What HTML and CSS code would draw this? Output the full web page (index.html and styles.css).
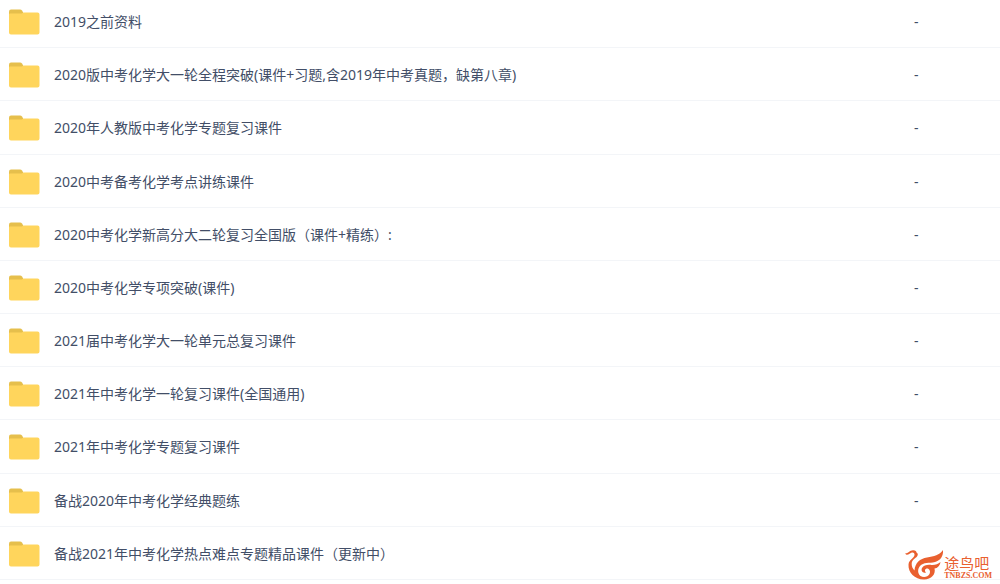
FILE: index.html
```html
<!DOCTYPE html>
<html lang="zh-CN">
<head>
    <meta charset="UTF-8">
    <title>中考化学</title>
    <link rel="stylesheet" href="styles.css">
</head>
<body>
    <!-- Folder icon shared by all rows -->
    <svg class="symbols" aria-hidden="true">
        <symbol id="folder" viewBox="0 0 32 26">
            <path d="M1 2.5Q1 .5 3 .5H12Q13.400 .5 14 1.500L16 5V10H1Z" fill="#e6bf4c"/>
            <path d="M1 5.500Q1 4.500 2 4.500H13Q14 4.500 14.600 4L15 3.700Q15.500 3.500 16.500 3.500H29.500Q31.500 3.500 31.500 5.500V23.500Q31.500 25.500 29.500 25.500H3Q1 25.500 1 23.500Z" fill="#ffd55c"/>
        </symbol>
    </svg>

    <table class="file-list">
        <tbody>
            <tr>
                <td><a class="file" href="#"><svg class="icon"><use href="#folder"/></svg>2019之前资料</a></td>
                <td class="size">-</td>
            </tr>
            <tr>
                <td><a class="file" href="#"><svg class="icon"><use href="#folder"/></svg>2020版中考化学大一轮全程突破(课件+习题,含2019年中考真题，缺第八章)</a></td>
                <td class="size">-</td>
            </tr>
            <tr>
                <td><a class="file" href="#"><svg class="icon"><use href="#folder"/></svg>2020年人教版中考化学专题复习课件</a></td>
                <td class="size">-</td>
            </tr>
            <tr>
                <td><a class="file" href="#"><svg class="icon"><use href="#folder"/></svg>2020中考备考化学考点讲练课件</a></td>
                <td class="size">-</td>
            </tr>
            <tr>
                <td><a class="file" href="#"><svg class="icon"><use href="#folder"/></svg>2020中考化学新高分大二轮复习全国版（课件+精练）:</a></td>
                <td class="size">-</td>
            </tr>
            <tr>
                <td><a class="file" href="#"><svg class="icon"><use href="#folder"/></svg>2020中考化学专项突破(课件)</a></td>
                <td class="size">-</td>
            </tr>
            <tr>
                <td><a class="file" href="#"><svg class="icon"><use href="#folder"/></svg>2021届中考化学大一轮单元总复习课件</a></td>
                <td class="size">-</td>
            </tr>
            <tr>
                <td><a class="file" href="#"><svg class="icon"><use href="#folder"/></svg>2021年中考化学一轮复习课件(全国通用)</a></td>
                <td class="size">-</td>
            </tr>
            <tr>
                <td><a class="file" href="#"><svg class="icon"><use href="#folder"/></svg>2021年中考化学专题复习课件</a></td>
                <td class="size">-</td>
            </tr>
            <tr>
                <td><a class="file" href="#"><svg class="icon"><use href="#folder"/></svg>备战2020年中考化学经典题练</a></td>
                <td class="size">-</td>
            </tr>
            <tr>
                <td><a class="file" href="#"><svg class="icon"><use href="#folder"/></svg>备战2021年中考化学热点难点专题精品课件（更新中）</a></td>
                <td class="size"></td>
            </tr>
        </tbody>
    </table>

    <div class="watermark">
        <svg class="bird" viewBox="0 0 40 30" aria-hidden="true">
            <!-- head, neck and wing -->
            <path d="M1 3.500C4 3.800 5.500 .5 9 .3C11.500 .2 12.500 1.500 12.500 2.500C14 3 14.300 5 13 6.500C11.500 8.300 8 9.500 7.700 13.500C7.500 16.500 8.800 18.500 10.500 20.500C11 13 16 8.500 23 7.500C30 6.500 35.500 5 39 0C39.500 6 36.500 10.500 31 12C25 13.500 19.500 12 16 16C13.500 19 13.500 23.500 16.500 26C19.500 28 24 27 25.500 24C27 21 25 18 22.500 18.500C20.500 19 20.500 21.500 22 22.500C18.500 23.500 16.800 20.500 18 18C19.500 15 24 14.500 27.500 15C31 15.300 34 14 36.500 12C36 15.500 33.500 18.300 30.500 18.500C32 24 27.500 29.500 20 29.500C10.500 29.500 4 22.500 4.500 14.500C4.800 9.500 10 8.500 10.500 5C10.800 3 9 2 7 3C4.500 4.300 3 5.800 1 3.500Z" fill="#e9602f"/>
        </svg>
        <div class="brand">
            <span class="brand-name">途鸟吧</span>
            <span class="brand-url">TNBZS.COM</span>
        </div>
    </div>
</body>
</html>
```
FILE: styles.css
```css
body {
    margin: 0;
    background-color: #fff;
    color: #424e67;
    font-family: "Noto Sans", "Noto Sans CJK SC", sans-serif;
    font-size: 14px;
    line-height: 20px;
}

.symbols {
    display: none;
}

/* File list */
.file-list {
    width: 100%;
    height: calc(100vh - 4px);
    border-collapse: separate;
    border-spacing: 0;
}

.file-list td {
    padding: 14px 0 12px;
    border-bottom: 1px solid #f3f5f8;
}

.file-list tr:first-child td {
    padding-top: 9px;
}

.file-list .size {
    width: 8.6%;
}

.file {
    display: flex;
    align-items: center;
    gap: 14px;
    padding-left: 8px;
    color: inherit;
    text-decoration: none;
}

.file:hover {
    color: #09aaff;
}

.icon {
    flex: none;
    width: 32px;
    height: 26px;
}

/* Site watermark */
.watermark {
    position: absolute;
    right: 8px;
    bottom: 4px;
    display: flex;
    align-items: flex-end;
    color: #e9602f;
}

.bird {
    width: 40px;
    height: 30px;
}

.brand {
    display: flex;
    flex-direction: column;
}

.brand-name {
    font-size: 15px;
    line-height: 18px;
}

.brand-url {
    font-family: "Liberation Serif", serif;
    font-size: 8px;
    font-weight: bold;
    line-height: 8px;
}
```
